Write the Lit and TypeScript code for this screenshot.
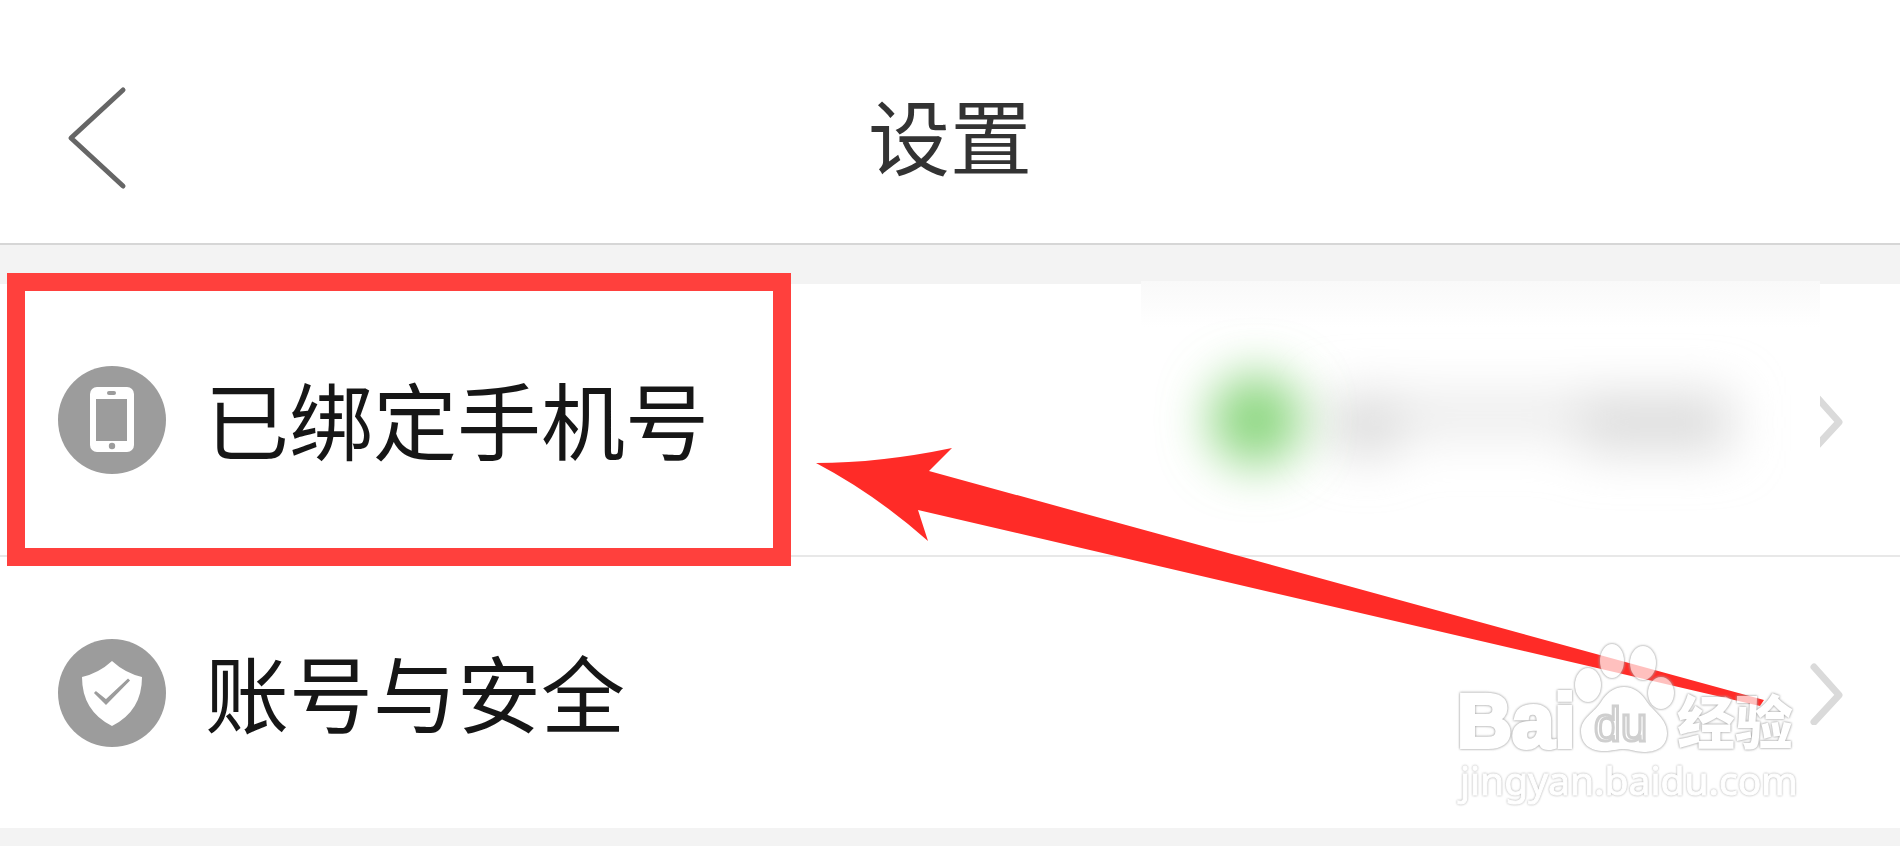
import { LitElement, html, css, svg } from "lit";
import { customElement, property } from "lit/decorators.js";

const phoneIcon = svg`
  <circle cx="54" cy="54" r="54" fill="#9c9c9c"></circle>
  <rect x="32" y="21" width="44" height="65" rx="7" fill="#fff"></rect>
  <rect x="49" y="25" width="9" height="4" rx="2" fill="#9c9c9c"></rect>
  <rect x="38" y="33" width="31" height="42" fill="#9c9c9c"></rect>
  <circle cx="54" cy="80" r="3.2" fill="#9c9c9c"></circle>`;

const shieldIcon = svg`
  <circle cx="54" cy="54" r="54" fill="#9c9c9c"></circle>
  <path d="M54 22 Q67 34 84 38 Q84 72 54 87 Q24 72 24 38 Q41 34 54 22Z" fill="#fff"></path>
  <path d="M38 53 L48 61 L70 40.500 L71 41.500 L48 65 L37 54Z" fill="#9c9c9c" stroke="#9c9c9c" stroke-width="1.500"></path>`;

@customElement("setting-row")
export class SettingRow extends LitElement {
  @property() label = "";
  @property() icon = "phone";
  @property({ type: Boolean }) concealed = false;

  static styles = css`
    :host {
      display: block;
      position: relative;
    }
    .row {
      display: flex;
      align-items: center;
      gap: 39px;
      height: 271px;
      padding: 0 56px 0 58px;
      background: #fff;
      color: #161616;
      text-decoration: none;
    }
    .icon {
      width: 108px;
      height: 108px;
      flex: none;
    }
    .label {
      flex: 1;
      padding-bottom: 4px;
      font-size: 84px;
      line-height: 120px;
    }
    .chevron {
      width: 34px;
      height: 64px;
      flex: none;
    }
    .veil {
      position: absolute;
      top: -3px;
      right: 80px;
      width: 679px;
      height: 262px;
      background: linear-gradient(#f9f9f9, #fcfcfc 24px, #fff 46px);
      overflow: hidden;
    }
  `;

  render() {
    return html`
      <a class="row" href="#${this.icon}">
        <svg class="icon" viewBox="0 0 108 108" aria-hidden="true">
          ${this.icon === "phone" ? phoneIcon : shieldIcon}
        </svg>
        <span class="label">${this.label}</span>
        <svg class="chevron" viewBox="0 0 34 64" aria-hidden="true">
          <path d="M4 6 L29 34 L4 61" fill="none" stroke="#dadada" stroke-width="7" stroke-linecap="round" stroke-linejoin="round"></path>
        </svg>
      </a>
      ${this.concealed
        ? html`<svg class="veil" viewBox="0 0 679 262" aria-hidden="true">
            <defs>
              <filter id="soft" x="-100%" y="-100%" width="300%" height="300%">
                <feGaussianBlur stdDeviation="25"></feGaussianBlur>
              </filter>
            </defs>
            <g filter="url(#soft)">
              <rect x="185" y="112" width="400" height="44" fill="#ebebeb"></rect>
              <ellipse cx="225" cy="146" rx="38" ry="30" fill="#dadada"></ellipse>
              <rect x="440" y="114" width="150" height="56" fill="#dcdcdc"></rect>
            </g>
            <circle cx="115" cy="139" r="46" fill="#8ad67e" filter="url(#soft)"></circle>
          </svg>`
        : null}
    `;
  }
}

@customElement("site-mark")
export class SiteMark extends LitElement {
  static styles = css`
    :host {
      display: block;
    }
    .mark {
      display: block;
      width: 360px;
      height: 180px;
      fill: #fff;
      opacity: 0.7;
    }
    .solid {
      filter: drop-shadow(0 0 1px #777) drop-shadow(0 0 1px #ccc);
    }
    .latin {
      font: bold 76px "Liberation Sans", sans-serif;
      stroke: #fff;
      stroke-width: 4px;
    }
    .small {
      font: 48px "Liberation Sans", sans-serif;
      stroke: #bbb;
      stroke-width: 3px;
    }
    .han {
      font: 900 58px "Noto Sans CJK SC", sans-serif;
    }
    .address {
      font: 39px "Noto Sans", sans-serif;
      stroke: #fff;
      stroke-width: 1px;
      filter: drop-shadow(0 0 1px #888);
    }
  `;

  render() {
    return html`
      <svg class="mark" viewBox="0 0 360 180">
        <g class="solid">
          <text class="latin" x="7" y="112">Bai</text>
          <path d="M174 52 C185 52 192 59 197 67 C204 77 217 84 217 98 C217 113 205 117 194 117 C185 117 181 114 174 114 C167 114 163 116 154 116 C140 116 131 109 131 96 C131 83 145 77 151 67 C156 59 163 52 174 52Z"></path>
          <text class="han" x="227" y="109">经验</text>
        </g>
        <g class="solid">
          <ellipse cx="138" cy="50" rx="13" ry="17"></ellipse>
          <ellipse cx="162" cy="26" rx="12" ry="17"></ellipse>
          <ellipse cx="193" cy="28" rx="13" ry="17"></ellipse>
          <ellipse cx="211" cy="58" rx="13" ry="16"></ellipse>
        </g>
        <text class="small" x="144" y="106">du</text>
        <text class="address" x="10" y="160">jingyan.baidu.com</text>
      </svg>
    `;
  }
}

@customElement("app-root")
export class AppRoot extends LitElement {
  static styles = css`
    :host {
      display: block;
      min-height: 100vh;
      background: #f3f3f3;
      font-family: "Noto Sans CJK SC", sans-serif;
    }
    .header {
      display: grid;
      grid-template-columns: 200px 1fr 200px;
      align-items: center;
      height: 211px;
      padding-top: 32px;
      background: #fff;
      border-bottom: 2px solid #d6d6d6;
    }
    .back {
      justify-self: start;
      margin-left: 60px;
      padding: 0;
      border: 0;
      background: none;
      line-height: 0;
    }
    .back-icon {
      width: 76px;
      height: 108px;
    }
    .title {
      margin: 0;
      padding-bottom: 8px;
      text-align: center;
      font-size: 82px;
      line-height: 120px;
      font-weight: 400;
      color: #333;
    }
    .list {
      position: relative;
      margin-top: 39px;
    }
    .item + .item {
      border-top: 2px solid #e8e8e8;
    }
    .frame {
      position: absolute;
      top: -11px;
      left: 7px;
      width: 784px;
      height: 293px;
      box-sizing: border-box;
      border: 18px solid #ff403d;
    }
    .arrow {
      position: absolute;
      top: 156px;
      right: 132px;
      width: 956px;
      height: 276px;
    }
    .mark {
      position: absolute;
      right: 90px;
      bottom: 13px;
    }
  `;

  render() {
    return html`
      <header class="header">
        <button class="back" aria-label="返回">
          <svg class="back-icon" viewBox="0 0 76 108">
            <path d="M63 6 L11 54 L63 102" fill="none" stroke="#666" stroke-width="5" stroke-linecap="round" stroke-linejoin="round"></path>
          </svg>
        </button>
        <h1 class="title">设置</h1>
      </header>
      <main class="list">
        <div class="item">
          <setting-row icon="phone" label="已绑定手机号" concealed></setting-row>
        </div>
        <div class="item">
          <setting-row icon="shield" label="账号与安全"></setting-row>
        </div>
        <div class="frame"></div>
        <svg class="arrow" viewBox="0 0 956 276" aria-hidden="true">
          <path d="M4 23 Q68 23 140 8 L117 31 L952 260 L948 266 L106 70 L116 101 Q63 54 4 23Z" fill="#ff2b27"></path>
        </svg>
        <site-mark class="mark"></site-mark>
      </main>
    `;
  }
}
